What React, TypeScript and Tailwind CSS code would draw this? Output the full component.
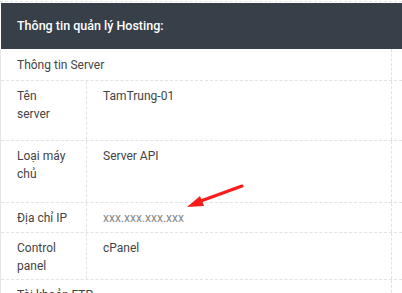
const ROWS = [
  { label: ["Tên", "server"], value: "TamTrung-01", h: "h-[60px]" },
  { label: ["Loại máy", "chủ"], value: "Server API", h: "h-[62px]" },
  { label: ["Địa chỉ IP"], value: "xxx.xxx.xxx.xxx", h: "h-[30px]", muted: true },
  { label: ["Control", "panel"], value: "cPanel", h: "h-[47px]" },
]

const Arrow = () => (
  <svg
    className="absolute left-[184px] top-[183px]"
    width="62"
    height="28"
    viewBox="0 0 62 28"
  >
    <line x1="58" y1="3" x2="14" y2="19" stroke="#ff1a1a" strokeWidth="3" strokeLinecap="round" />
    <polygon points="3,24 16,13 20,23" fill="#ff1a1a" />
  </svg>
)

export default function App() {
  return (
    <div className="relative w-[402px] h-[293px] overflow-hidden bg-white font-['Roboto',sans-serif] text-[12px] text-[#444]">
      <div className="pt-px">
        <div className="border-t border-dashed border-[#dfe3e6]" />
        <div className="mt-px ml-px h-[46px] bg-[#373f49] flex items-center px-4 text-white font-medium text-[12.5px]">
          Thông tin quản lý Hosting:
        </div>
      </div>

      <div className="border-l border-[#e6e6e6]">
        <div className="grid grid-cols-[391px_1fr] h-[32px] border-b border-dashed border-[#dfe3e6]">
          <div className="border-r border-dashed border-[#dfe3e6] px-4 pt-[7px] leading-[18px]">
            Thông tin Server
          </div>
          <div />
        </div>

        {ROWS.map((row, i) => (
          <div
            key={i}
            className={`grid grid-cols-[86px_305px_1fr] ${row.h} border-b border-dashed border-[#dfe3e6]`}
          >
            <div className="border-r border-dashed border-[#dfe3e6] px-4 pt-[6px] leading-[18px] whitespace-nowrap">
              {row.label.map((l) => (
                <div key={l}>{l}</div>
              ))}
            </div>
            <div
              className={`border-r border-dashed border-[#dfe3e6] px-4 pt-[6px] leading-[18px] ${
                row.muted ? "text-[#888]" : ""
              }`}
            >
              {row.value}
            </div>
            <div />
          </div>
        ))}

        <div className="grid grid-cols-[391px_1fr] h-[32px]">
          <div className="border-r border-dashed border-[#dfe3e6] px-4 pt-[6px] leading-[18px]">
            Tài khoản FTP
          </div>
          <div />
        </div>
      </div>

      <Arrow />
    </div>
  )
}
